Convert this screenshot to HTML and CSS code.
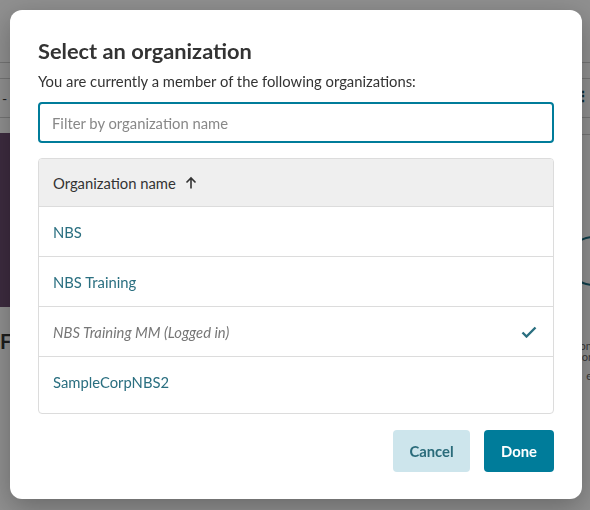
FILE: index.html
```html
<!DOCTYPE html>
<html>
<head>
<meta charset="utf-8">
<link rel="stylesheet" href="styles.css">
</head>
<body>
<div class="page">
  <div class="topbar"><span class="topbar-text">Information</span></div>
  <div class="strip"></div>
  <div class="toolbar"><span class="dash">-</span><span class="dots">⋮⋮</span></div>
  <div class="content">
    <div class="card-left">
      <div class="hero"></div>
      <div class="card-title">F</div>
    </div>
    <div class="card-right">
      <div class="circle"></div>
      <div class="orange">Plan</div>
      <div class="grey first">on</div>
      <div class="grey">or</div>
      <div class="grey gap">e</div>
    </div>
  </div>
</div>

<div class="overlay">
  <div class="modal" role="dialog">
    <h1 class="title">Select an organization</h1>
    <p class="subtitle">You are currently a member of the following organizations:</p>
    <input class="filter" type="text" placeholder="Filter by organization name">
    <div class="table">
      <div class="thead">
        <span>Organization name</span>
        <svg class="arrow" width="14" height="14" viewBox="0 0 14 14"><path d="M7 12.5V2M2.5 6.5L7 2l4.5 4.5" fill="none" stroke="#333" stroke-width="1.6"/></svg>
      </div>
      <div class="row"><span class="link">NBS</span></div>
      <div class="row"><span class="link">NBS Training</span></div>
      <div class="row current"><span class="muted">NBS Training MM (Logged in)</span>
        <svg class="check" width="16" height="12" viewBox="0 0 16 12"><path d="M1.5 6.5l4 4L14.5 1.5" fill="none" stroke="#2a6f80" stroke-width="2.4"/></svg>
      </div>
      <div class="row last"><span class="link">SampleCorpNBS2</span></div>
    </div>
    <div class="actions">
      <button class="btn cancel">Cancel</button>
      <button class="btn done">Done</button>
    </div>
  </div>
</div>
</body>
</html>
```
FILE: styles.css
```css
* { box-sizing: border-box; }
html, body { margin: 0; height: 100%; }
body {
  font-family: Lato, "Open Sans", "Noto Sans", sans-serif;
  background: #fff;
  color: #333;
  overflow: hidden;
}
.page { width: 590px; height: 510px; display: flex; flex-direction: column; }
.topbar {
  height: 63px; border-bottom: 1px solid #cfcfcf;
  display: flex; align-items: flex-start; padding-top: 30px;
}
.topbar-text { font-size: 16px; line-height: 20px; margin-left: -82px; color: #333; }
.strip { height: 16px; border-bottom: 1px solid #cfcfcf; }
.toolbar {
  height: 39px; border-bottom: 1px solid #cfcfcf;
  display: flex; align-items: center; justify-content: space-between;
}
.dash { font-size: 14px; margin-left: 2px; }
.dots { color: #0b5566; font-weight: bold; font-size: 14px; letter-spacing: -4px; margin-right: 4px; margin-top: -5px; }
.content { flex: 1; display: flex; justify-content: space-between; padding-top: 15px; }
.card-left { width: 120px; }
.hero { height: 174px; background: #6c4d70; }
.card-title { font-size: 20px; line-height: 24px; font-weight: bold; margin-top: 22px; }
.card-right { width: 40px; display: flex; flex-direction: column; align-items: flex-end; padding-top: 101px; border-top: 1px solid #cfcfcf; margin-top: 1px; }
.circle { width: 50px; height: 50px; margin-right: -28px; border: 2px solid #1a6f84; border-radius: 50%; }
.orange { color: #e07a1a; font-weight: bold; font-size: 13px; line-height: 16px; margin-top: 20px; margin-right: -26px; }
.grey { color: #666; font-size: 11px; line-height: 11px; margin-right: -2px; }
.grey.first { margin-top: 18px; }
.grey.gap { margin-top: 8px; }

.overlay {
  position: fixed; inset: 0;
  background: rgba(0, 0, 0, 0.44);
  display: flex; align-items: flex-start; justify-content: flex-start;
}
.modal {
  margin: 10px 0 0 10px;
  width: 572px; height: 489px;
  background: #fff;
  border-radius: 12px;
  box-shadow: 0 8px 28px rgba(0,0,0,0.28);
  padding: 27px 28px 0 28px;
  display: flex; flex-direction: column;
}
.title { margin: 0; font-size: 21.8px; line-height: 28px; font-weight: 700; color: #333; }
.subtitle { margin: 7px 0 0; font-size: 14.8px; line-height: 18px; color: #333; }
.filter {
  margin-top: 12px;
  height: 41px; width: 100%; flex: none;
  border: 2px solid #007c9a; border-radius: 4px;
  padding: 0 12px;
  font-family: inherit; font-size: 14.8px; color: #333;
  outline: none;
}
.filter::placeholder { color: #888; }
.table {
  margin-top: 15px;
  border: 1px solid #dcdcdc; border-radius: 4px;
  overflow: hidden;
}
.thead {
  height: 48px; background: #efefef;
  display: flex; align-items: center; gap: 8px;
  padding: 0 14px;
  font-size: 14.8px; color: #333;
  border-bottom: 1px solid #dcdcdc;
}
.arrow { margin-top: 1px; }
.row {
  height: 50px; display: flex; align-items: center; justify-content: space-between;
  padding: 0 16px 0 14px;
  font-size: 14.8px;
  border-bottom: 1px solid #dcdcdc;
}
.row.last { height: 56px; border-bottom: none; padding-bottom: 7px; }
.link { color: #2a6f80; }
.muted { color: #777; font-style: italic; }
.actions {
  margin-top: 16px;
  display: flex; justify-content: flex-end; gap: 14px;
}
.btn {
  height: 42px; border: none; border-radius: 4px;
  font-family: inherit; font-size: 14.8px; font-weight: 700;
  cursor: pointer;
}
.cancel { width: 77px; background: #cde5ec; color: #2a6b7a; }
.done { width: 70px; background: #007c9a; color: #fff; }
```
